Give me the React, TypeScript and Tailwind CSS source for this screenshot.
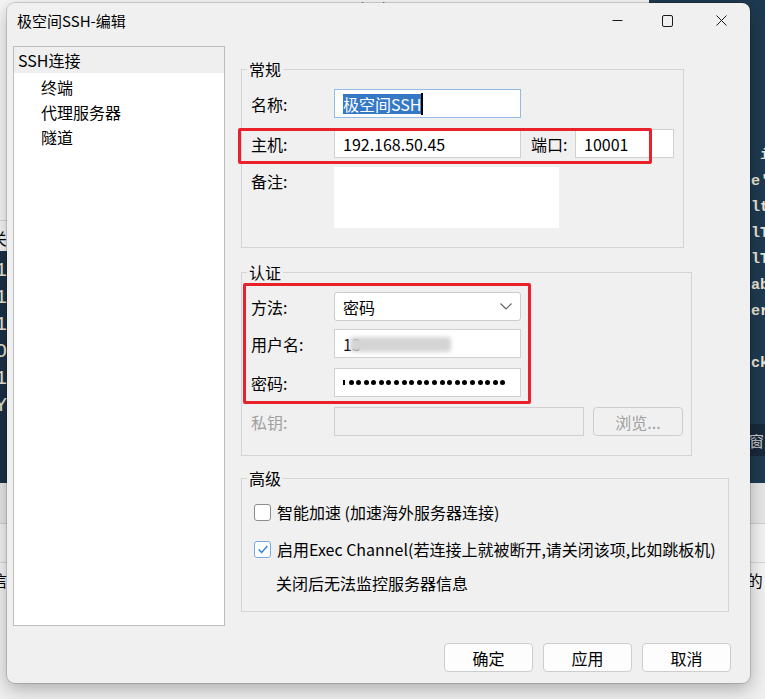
import React from "react";

const labelW = "w-[83px] shrink-0";

function Group({ title, className = "", children }: { title: string; className?: string; children: React.ReactNode }) {
  return (
    <fieldset className={`border border-[#d4d4d4] ${className}`}>
      <legend className="ml-[5px] px-[2px] text-[16px] leading-[16px] text-black">{title}</legend>
      {children}
    </fieldset>
  );
}

function Box({ className = "", children }: { className?: string; children?: React.ReactNode }) {
  return (
    <div className={`flex h-[29px] items-center border bg-white pl-[8px] text-[16px] leading-none text-black ${className}`}>
      {children}
    </div>
  );
}

function Check({ checked }: { checked?: boolean }) {
  return (
    <div
      className={`flex h-[17px] w-[17px] shrink-0 items-center justify-center rounded-[3px] border bg-white ${
        checked ? "border-[#7aa9dc]" : "border-[#8c8c8c]"
      }`}
    >
      {checked && (
        <svg width="14" height="14" viewBox="0 0 16 16" fill="none">
          <polyline points="3,8.5 6.5,12 13,4.5" stroke="#2f7fd0" strokeWidth="1.6" />
        </svg>
      )}
    </div>
  );
}

function Btn({ label, disabled }: { label: string; disabled?: boolean }) {
  return (
    <div
      className={`flex h-[29px] items-center justify-center rounded-[4px] border border-[#cdcdcd] text-[16px] leading-none ${
        disabled ? "bg-[#f0f0f0] text-[#a0a0a0]" : "bg-[#fdfdfd] text-black"
      }`}
    >
      {label}
    </div>
  );
}

// terminal lines peeking out on both sides of the dialog
const termRight = [" i", "e'", "lt", "lT", "lT", "ab", "er", "", "ck"];
const termLeft = ["1", "1", "1", "O", "1", "Y"];

export default function App() {
  return (
    <div className="relative h-[699px] w-[765px] overflow-hidden bg-[#efefef] font-['Noto_Sans_CJK_SC',sans-serif]">
      {/* desktop behind the dialog */}
      <div className="absolute left-0 top-0 h-[251px] w-[649px] bg-[#f5f5f5]">
        <div className="flex h-[6px] items-end gap-[60px] overflow-hidden pl-[102px] text-[14px] leading-[14px] text-[#555]">
          <span className="translate-y-[8px]">192.168.50.45</span>
          <span className="translate-y-[8px]">10001</span>
          <span className="translate-y-[8px]">1/22/22:00</span>
        </div>
        <div className="mt-[214px] h-px bg-[#d8d8d8]" />
        <div className="-ml-[9px] mt-[5px] text-[16px] text-black">关</div>
      </div>
      <div className="absolute left-0 top-[251px] h-[232px] w-[649px] bg-[#1b3145]">
        <div className="-ml-[5px] mt-[6px] flex flex-col font-['Liberation_Mono',monospace] text-[20px] leading-[27px] text-[#ece6d6]">
          {termLeft.map((t, i) => (
            <span key={i}>{t}</span>
          ))}
        </div>
      </div>
      <div className="absolute left-[649px] top-0 h-[483px] w-[116px] bg-[#1e3a50]">
        <div className="ml-[102px] mt-[143px] flex flex-col whitespace-pre font-['Liberation_Mono',monospace] text-[14px] font-bold leading-[26px] text-[#ece6d6]">
          {termRight.map((t, i) => (
            <span key={i} className="h-[26px] text-[15px]">
              {t}
            </span>
          ))}
        </div>
        <div className="mt-[47px] flex h-[32px] items-center whitespace-nowrap bg-[#18293a] pl-[100px] text-[15px] leading-none text-[#c8ccd0]">
          窗口
        </div>
      </div>
      <div className="absolute left-0 top-[483px] flex h-[216px] w-full flex-col">
        <div className="h-[40px] bg-[#e6e6e6]" />
        <div className="h-px bg-[#cfcfcf]" />
        <div className="h-[38px] bg-[#f2f2f2]" />
        <div className="h-px bg-[#d6d6d6]" />
        <div className="flex justify-between bg-[#f4f4f4] pt-[9px] text-[16px] leading-none text-black">
          <span className="-ml-[9px]">信</span>
          <span className="mr-[-6px] whitespace-nowrap">的 I</span>
        </div>
      </div>

      {/* dialog window */}
      <div className="absolute left-[7px] top-[3px] flex h-[680px] w-[743px] flex-col rounded-[8px] bg-[#f0f0f0] shadow-[0_0_0_1px_rgba(0,0,0,0.14),0_6px_18px_rgba(0,0,0,0.28)]">
        <div className="flex h-[35px] items-center">
          <span className="pl-[10px] text-[15px] leading-none text-black">极空间SSH-编辑</span>
          <div className="ml-auto flex h-full items-center">
            <div className="flex h-full w-[50px] items-center justify-center">
              <svg width="11" height="11" viewBox="0 0 11 11">
                <line x1="0.5" y1="5.5" x2="10.5" y2="5.5" stroke="#1a1a1a" strokeWidth="1" />
              </svg>
            </div>
            <div className="flex h-full w-[50px] items-center justify-center">
              <svg width="11" height="12" viewBox="0 0 11 12" fill="none">
                <rect x="0.5" y="0.5" width="10" height="11" rx="1.5" stroke="#1a1a1a" strokeWidth="1" />
              </svg>
            </div>
            <div className="flex h-full w-[58px] items-center justify-center">
              <svg width="11" height="11" viewBox="0 0 11 11">
                <path d="M0.5 0.5 L10.5 10.5 M10.5 0.5 L0.5 10.5" stroke="#1a1a1a" strokeWidth="1" />
              </svg>
            </div>
          </div>
        </div>

        <div className="mt-[8px] flex h-[580px]">
          {/* navigation tree */}
          <div className="ml-[6px] h-full w-[212px] border border-[#bdbdbd] bg-white text-[16px] leading-none text-black">
            <div className="flex h-[26px] items-center bg-[#efefef] pl-[4px]">SSH连接</div>
            <div className="mt-[1px] flex flex-col pl-[27px]">
              <div className="flex h-[25px] items-center">终端</div>
              <div className="flex h-[25px] items-center">代理服务器</div>
              <div className="flex h-[25px] items-center">隧道</div>
            </div>
          </div>

          <div className="ml-[16px] mt-[15px] flex flex-col text-[16px] leading-none text-black">
            <Group title="常规" className="w-[443px]">
              <div className="pb-[19px] pl-[9px] pt-[12px]">
                <div className="flex items-center">
                  <span className={labelW}>名称:</span>
                  <Box className="w-[187px] border-[#92bbe6]">
                    <span className="flex h-[20px] items-center bg-[#3478c6] text-white">极空间SSH</span>
                    <span className="h-[22px] w-[2px] bg-black" />
                  </Box>
                </div>
                <div className="relative mt-[11px] flex items-center">
                  <span className={labelW}>主机:</span>
                  <Box className="w-[187px] border-[#d0d0d0]">192.168.50.45</Box>
                  <span className="ml-[10px] w-[44px]">端口:</span>
                  <Box className="w-[99px] border-[#d0d0d0]">10001</Box>
                  <div className="absolute left-[-13px] top-[-1px] h-[36px] w-[414px] rounded-[2px] border-[3px] border-[#e8212a]" />
                </div>
                <div className="mt-[9px] flex items-start">
                  <span className={`${labelW} pt-[6px]`}>备注:</span>
                  <div className="h-[61px] w-[225px] bg-white" />
                </div>
              </div>
            </Group>

            <Group title="认证" className="mt-[16px] w-[451px]">
              <div className="relative pb-[19px] pl-[9px] pt-[12px]">
                <div className="flex items-center">
                  <span className={labelW}>方法:</span>
                  <Box className="w-[187px] rounded-[3px] border-[#cccccc]">
                    <span>密码</span>
                    <svg className="ml-auto mr-[8px]" width="12" height="7" viewBox="0 0 12 7" fill="none">
                      <polyline points="0.5,0.5 6,6 11.5,0.5" stroke="#5f5f5f" strokeWidth="1.1" />
                    </svg>
                  </Box>
                </div>
                <div className="mt-[8px] flex items-center">
                  <span className={labelW}>用户名:</span>
                  <Box className="relative w-[187px] border-[#d0d0d0]">
                    <span>13</span>
                    <span className="absolute left-[15px] top-[7px] h-[15px] w-[101px] rounded-[3px] bg-[#d4d4d4] blur-[2px]" />
                  </Box>
                </div>
                <div className="mt-[10px] flex items-center">
                  <span className={labelW}>密码:</span>
                  <Box className="w-[187px] border-[#d0d0d0]">
                    <span className="h-[5px] w-[1.5px] bg-black" />
                    <div className="ml-[4px] flex gap-[2.6px]">
                      {Array.from({ length: 21 }).map((_, i) => (
                        <span key={i} className="h-[5px] w-[5px] rounded-full bg-black" />
                      ))}
                    </div>
                  </Box>
                </div>
                <div className="mt-[10px] flex items-center">
                  <span className={`${labelW} text-[#a0a0a0]`}>私钥:</span>
                  <div className="h-[29px] w-[250px] border border-[#cfcfcf] bg-[#f0f0f0]" />
                  <div className="ml-[9px] w-[90px]">
                    <Btn label="浏览..." disabled />
                  </div>
                </div>
                <div className="absolute left-[1px] top-[3px] h-[121px] w-[288px] rounded-[2px] border-[3px] border-[#e8212a]" />
              </div>
            </Group>

            <Group title="高级" className="mt-[14px] w-[488px]">
              <div className="pb-[16px] pl-[12px] pt-[14px]">
                <div className="flex h-[24px] items-center gap-[6px]">
                  <Check />
                  <span>智能加速 (加速海外服务器连接)</span>
                </div>
                <div className="mt-[13px] flex h-[24px] items-center gap-[6px]">
                  <Check checked />
                  <span>启用Exec Channel(若连接上就被断开,请关闭该项,比如跳板机)</span>
                </div>
                <div className="mt-[10px] flex h-[24px] items-center pl-[22px]">关闭后无法监控服务器信息</div>
              </div>
            </Group>
          </div>
        </div>

        <div className="mt-[17px] flex justify-end gap-[10px] pr-[19px]">
          <div className="w-[89px]">
            <Btn label="确定" />
          </div>
          <div className="w-[89px]">
            <Btn label="应用" />
          </div>
          <div className="w-[89px]">
            <Btn label="取消" />
          </div>
        </div>
      </div>
    </div>
  );
}
